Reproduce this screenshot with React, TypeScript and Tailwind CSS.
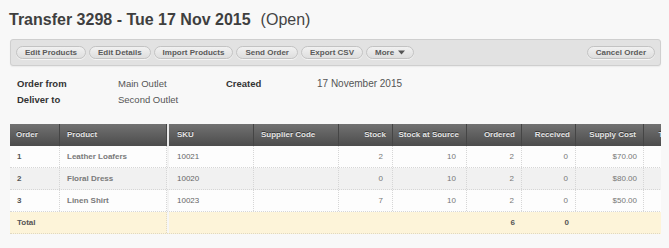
import React from "react";

type Col = {
  label: string;
  w: string;
  head: string;
  body: string;
};

const colsLeft: Col[] = [
  { label: "Order", w: "w-[50px]", head: "pl-[6px] text-left", body: "pl-[7px] text-left font-bold text-[#555]" },
  { label: "Product", w: "w-[107px]", head: "pl-[7px] text-left", body: "pl-[7px] text-left font-bold text-[#7a7a7a]" },
];

const colsRight: Col[] = [
  { label: "SKU", w: "w-[85px]", head: "pl-[8px] text-left", body: "pl-[8px] text-left text-[#666]" },
  { label: "Supplier Code", w: "w-[85px]", head: "pl-[7px] text-left", body: "pl-[7px] text-left text-[#666]" },
  { label: "Stock", w: "w-[54px]", head: "pr-[6px] text-right", body: "pr-[9px] text-right text-[#777]" },
  { label: "Stock at Source", w: "w-[74px]", head: "pr-[7px] text-right", body: "pr-[10px] text-right text-[#777]" },
  { label: "Ordered", w: "w-[55px]", head: "pr-[6px] text-right", body: "pr-[7px] text-right text-[#777]" },
  { label: "Received", w: "w-[54px]", head: "pr-[5px] text-right", body: "pr-[7px] text-right text-[#777]" },
  { label: "Supply Cost", w: "w-[68px]", head: "pr-[7px] text-right", body: "pr-[6px] text-right text-[#777]" },
  { label: "Total Cost", w: "w-[60px]", head: "pr-[6px] text-right", body: "pr-[6px] text-right text-[#777]" },
];

const rows = [
  { bg: "bg-[#fdfdfd]", cells: ["1", "Leather Loafers", "10021", "", "2", "10", "2", "0", "$70.00", ""] },
  { bg: "bg-[#f1f1f1]", cells: ["2", "Floral Dress", "10020", "", "0", "10", "2", "0", "$80.00", ""] },
  { bg: "bg-[#fdfdfd]", cells: ["3", "Linen Shirt", "10023", "", "7", "10", "2", "0", "$50.00", ""] },
];

const buttons = ["Edit Products", "Edit Details", "Import Products", "Send Order", "Export CSV"];

function Btn({ children }: { children: React.ReactNode }) {
  return (
    <button className="h-[13px] flex items-center rounded-full border border-[#c3c3c3] bg-linear-to-b from-[#f1f1f1] to-[#dedede] px-[8px] text-[8px] font-bold leading-none text-[#5a5a5a] shadow-[0_1px_0_#f4f4f4]">
      {children}
    </button>
  );
}

export default function App() {
  return (
    <div className="w-[669px] h-[248px] overflow-hidden bg-[#f8f8f8] font-['Liberation_Sans',Arial,sans-serif]">
      <div className="pl-[9px] pt-[10px] text-[16px] leading-5 text-[#3f3f3f] whitespace-nowrap">
        <span className="font-bold">Transfer 3298 - Tue 17 Nov 2015</span>
        <span className="ml-[10px] text-[#444]">(Open)</span>
      </div>

      <div className="ml-[10px] mt-[9px] w-[651px] h-[27px] rounded-[3px] border border-[#cfcfcf] bg-[#e2e2e2] flex items-center pl-[5px] pr-[5px] shadow-[0_1px_1px_#ebebeb]">
        <div className="flex items-center gap-[3px]">
          {buttons.map((b) => (
            <Btn key={b}>{b}</Btn>
          ))}
          <Btn>
            More
            <svg width="7" height="5" viewBox="0 0 7 5" className="ml-[4px]">
              <path d="M0 0.5 L7 0.5 L3.5 4.5 Z" fill="#555" />
            </svg>
          </Btn>
        </div>
        <div className="ml-auto">
          <Btn>Cancel Order</Btn>
        </div>
      </div>

      <div className="mt-[10px] ml-[17px] grid grid-cols-[101px_108px_91px_1fr] text-[9.5px] leading-4 text-[#555]">
        <div className="font-bold text-[#333]">Order from</div>
        <div>Main Outlet</div>
        <div className="font-bold text-[#333]">Created</div>
        <div className="text-[10px]">17 November 2015</div>
        <div className="font-bold text-[#333]">Deliver to</div>
        <div>Second Outlet</div>
        <div></div>
        <div></div>
      </div>

      <div className="mt-[16px] ml-[10px] w-[651px] overflow-hidden text-[8px]">
        <div className="w-[720px]">
          <div className="flex h-[22px] bg-linear-to-b from-[#727272] to-[#4c4c4c] text-[#e4e4e4] font-bold">
            {colsLeft.map((c) => (
              <div key={c.label} className={`${c.w} ${c.head} flex items-center border-r border-[#454545] [text-shadow:0_-1px_0_#333]`}>
                <span className="w-full">{c.label}</span>
              </div>
            ))}
            <div className="w-[2px] bg-[#e9e9e9]"></div>
            {colsRight.map((c) => (
              <div key={c.label} className={`${c.w} ${c.head} flex items-center border-r border-[#454545] [text-shadow:0_-1px_0_#333]`}>
                <span className="w-full">{c.label}</span>
              </div>
            ))}
          </div>
          {rows.map((r, i) => (
            <div key={i} className={`flex h-[22px] ${r.bg} border-b border-dotted border-[#d6d6d6]`}>
              {colsLeft.map((c, j) => (
                <div key={j} className={`${c.w} ${c.body} flex items-center border-r border-dotted border-[#d6d6d6]`}>
                  <span className="w-full">{r.cells[j]}</span>
                </div>
              ))}
              <div className="w-[2px] bg-[#f4f4f4]"></div>
              {colsRight.map((c, j) => (
                <div key={j} className={`${c.w} ${c.body} flex items-center border-r border-dotted border-[#d6d6d6]`}>
                  <span className="w-full">{r.cells[j + 2]}</span>
                </div>
              ))}
            </div>
          ))}
          <div className="flex h-[22px] bg-[#fdf4d9] border-b border-dotted border-[#e0d8c0] font-bold text-[#555]">
            <div className="w-[157px] pl-[7px] flex items-center border-r border-dotted border-[#e2dac2]">Total</div>
            <div className="w-[2px] bg-[#f6f6f6]"></div>
            <div className="w-[85px]"></div>
            <div className="w-[85px]"></div>
            <div className="w-[54px]"></div>
            <div className="w-[74px]"></div>
            <div className="w-[55px] pr-[7px] flex items-center justify-end">6</div>
            <div className="w-[54px] pr-[7px] flex items-center justify-end">0</div>
            <div className="w-[68px]"></div>
            <div className="w-[60px]"></div>
          </div>
        </div>
      </div>
    </div>
  );
}
